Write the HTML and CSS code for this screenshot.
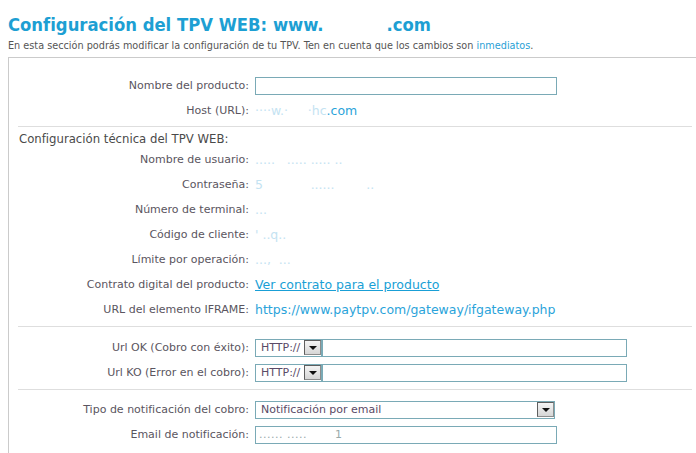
FILE: index.html
```html
<!DOCTYPE html>
<html lang="es">
<head>
<meta charset="UTF-8">
<title>Configuración del TPV WEB</title>
<link rel="stylesheet" href="styles.css">
</head>
<body>
<h1 class="title">Configuración del TPV WEB: www.<span class="mask"></span>.com</h1>
<p class="intro">En esta sección podrás modificar la configuración de tu TPV. Ten en cuenta que los cambios son <a href="#">inmediatos</a>.</p>

<div class="panel">
    <div class="group g1">
        <div class="row">
            <label>Nombre del producto:</label>
            <div class="val"><input type="text" class="txt w300" value=""></div>
        </div>
        <div class="row">
            <label>Host (URL):</label>
            <div class="val"><span class="faint">····w.·&nbsp;&nbsp;&nbsp;&nbsp;&nbsp;·hc</span>.com</div>
        </div>
    </div>
    <hr>
    <div class="group g2">
        <h2>Configuración técnica del TPV WEB:</h2>
        <div class="row">
            <label>Nombre de usuario:</label>
            <div class="val"><span class="faint">.....&nbsp;&nbsp;&nbsp;.....&nbsp;.....&nbsp;..</span></div>
        </div>
        <div class="row">
            <label>Contraseña:</label>
            <div class="val"><span class="faint">5&nbsp;&nbsp;&nbsp;&nbsp;&nbsp;&nbsp;&nbsp;&nbsp;&nbsp;&nbsp;&nbsp;&nbsp;......&nbsp;&nbsp;&nbsp;&nbsp;&nbsp;&nbsp;&nbsp;&nbsp;..</span></div>
        </div>
        <div class="row">
            <label>Número de terminal:</label>
            <div class="val"><span class="faint">...</span></div>
        </div>
        <div class="row">
            <label>Código de cliente:</label>
            <div class="val"><span class="faint">'&nbsp;..q..</span></div>
        </div>
        <div class="row">
            <label>Límite por operación:</label>
            <div class="val"><span class="faint">...,&nbsp;&nbsp;...</span></div>
        </div>
        <div class="row">
            <label>Contrato digital del producto:</label>
            <div class="val"><a href="#">Ver contrato para el producto</a></div>
        </div>
        <div class="row">
            <label>URL del elemento IFRAME:</label>
            <div class="val">https://www.paytpv.com/gateway/ifgateway.php</div>
        </div>
    </div>
    <hr>
    <div class="group g3">
        <div class="row">
            <label>Url OK (Cobro con éxito):</label>
            <div class="val">
                <div class="url-field">
                    <span class="proto">HTTP://<span class="drop"></span></span>
                    <input type="text" class="url-input" value="">
                </div>
            </div>
        </div>
        <div class="row">
            <label>Url KO (Error en el cobro):</label>
            <div class="val">
                <div class="url-field">
                    <span class="proto">HTTP://<span class="drop"></span></span>
                    <input type="text" class="url-input" value="">
                </div>
            </div>
        </div>
    </div>
    <hr>
    <div class="group g4">
        <div class="row">
            <label>Tipo de notificación del cobro:</label>
            <div class="val">
                <div class="select w298">Notificación por email<span class="drop"></span></div>
            </div>
        </div>
        <div class="row">
            <label>Email de notificación:</label>
            <div class="val"><input type="text" class="txt w300 faint-in" value="......&nbsp;.....&nbsp;&nbsp;&nbsp;&nbsp;&nbsp;&nbsp;&nbsp;1"></div>
        </div>
    </div>
</div>
</body>
</html>
```

FILE: styles.css
```css
html, body {margin: 0; overflow: hidden; background: #fff;}
body {padding: 8px; font-family: "DejaVu Sans", Verdana, sans-serif; color: #555;}

.title {margin: 0; padding-top: 5px; font-size: 18.3px; line-height: 24px; color: #1d9fd3; font-family: "DejaVu Sans Condensed", "DejaVu Sans", sans-serif; font-weight: bold; white-space: nowrap;}
.title .mask {display: inline-block; width: 63px;}
.intro {margin: 2px 0 0; font-size: 9.7px; line-height: 14px; color: #555;}
.intro a {color: #2a9fd6; text-decoration: none;}

.panel {margin-top: 4px; width: 700px; border-top: 1px solid #cbcbcb; border-left: 1px solid #cbcbcb;}
.panel hr {margin: 0 0 0 9px; width: 674px; height: 0; border: 0; border-top: 1px solid #dedede;}

.group .row {display: grid; grid-template-columns: 240px 1fr; column-gap: 6px; align-items: center; height: 25px;}
.group label {text-align: right; font-size: 11px; color: #5a5560; white-space: nowrap;}
.group .val {font-size: 12.5px; color: #2aa3da; white-space: nowrap;}
.group .val a {color: #199fd6; text-decoration: underline;}
.group h2 {margin: 0 0 0 10px; font-size: 11.7px; font-weight: normal; line-height: 16px; color: #4a4a4a;}

.g1 {padding: 15px 0 3px;}
.g2 {padding: 4px 0 4px;}
.g3 {padding: 8px 0 4px;}
.g4 {padding: 7px 0 6px;}

.faint {color: #c4e3f2;}

.txt {box-sizing: border-box; display: block; height: 18px; margin: 0; padding: 0 3px; border: 1px solid #7aaab6; font-family: "DejaVu Sans", sans-serif; font-size: 11px; color: #555;}
.txt:focus {outline: none;}
.w300 {width: 302px;}
.faint-in {color: #9aa; letter-spacing: 0.5px;}

.url-field {display: flex; box-sizing: border-box; width: 372px; height: 18px; border: 1px solid #7aaab6; border-left: 0;}
.url-field .proto {display: flex; align-items: center; box-sizing: border-box; height: 18px; margin-top: -1px; padding-left: 5px; border: 1px solid #7aaab6; border-right: 2px solid #7aaab6; font-size: 11px; color: #5a4a66;}
.url-field .url-input {flex: 1; border: 0; height: 16px; padding: 0; margin: 0;}
.url-field .url-input:focus {outline: none;}

.drop {position: relative; display: inline-block; box-sizing: border-box; width: 17px; height: 15px; margin-left: 4px; border: 1px solid #5e5e5e; border-right-color: #8d8d8d; border-bottom-color: #8d8d8d; background: linear-gradient(#f4f4f4, #d6d6d6);}
.drop::after {content: ""; position: absolute; left: 4px; top: 5px; border-left: 4px solid transparent; border-right: 4px solid transparent; border-top: 4px solid #111;}

.select {display: flex; align-items: center; justify-content: space-between; box-sizing: border-box; height: 18px; padding-left: 5px; border: 1px solid #7aaab6; font-size: 11px; color: #5a4a66;}
.select .drop {margin-right: 0;}
.w298 {width: 300px;}
```
